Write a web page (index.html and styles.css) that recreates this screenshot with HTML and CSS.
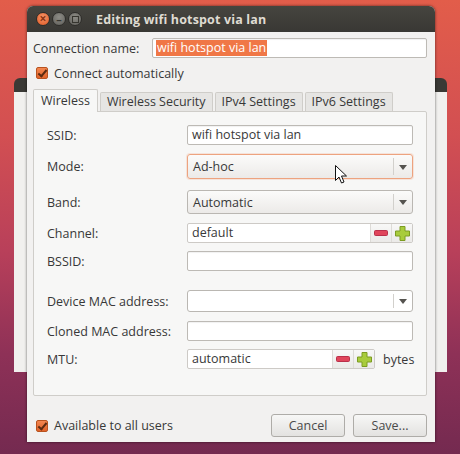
FILE: index.html
```html
<!DOCTYPE html>
<html lang="en">

<head>
    <meta charset="UTF-8">
    <title>Editing wifi hotspot via lan</title>
    <link rel="stylesheet" href="styles.css">
</head>

<body>
    <div class="desktop">
        <!-- window behind the dialog -->
        <div class="back-window"></div>

        <div class="dialog">
            <div class="titlebar">
                <span class="wbtn close">&#215;</span>
                <span class="wbtn">&#8211;</span>
                <span class="wbtn max"><i></i></span>
                <span class="title">Editing wifi hotspot via lan</span>
            </div>

            <div class="content">
                <div class="name-row">
                    <label class="name-label">Connection name:</label>
                    <div class="entry name-entry"><span class="selected">wifi hotspot via lan</span></div>
                </div>

                <div class="check-row">
                    <span class="checkbox"></span>
                    <span>Connect automatically</span>
                </div>

                <div class="notebook">
                    <div class="tabs">
                        <div class="tab active">Wireless</div>
                        <div class="tab">Wireless Security</div>
                        <div class="tab">IPv4 Settings</div>
                        <div class="tab">IPv6 Settings</div>
                    </div>
                    <div class="panel">
                        <div class="row r-ssid">
                            <label>SSID:</label>
                            <div class="entry">wifi hotspot via lan</div>
                        </div>
                        <div class="row r-mode">
                            <label>Mode:</label>
                            <div class="combo focused">
                                <span class="combo-text">Ad-hoc</span>
                                <span class="arrow"></span>
                            </div>
                        </div>
                        <div class="row r-band">
                            <label>Band:</label>
                            <div class="combo">
                                <span class="combo-text">Automatic</span>
                                <span class="arrow"></span>
                            </div>
                        </div>
                        <div class="row r-channel">
                            <label>Channel:</label>
                            <div class="spin">
                                <div class="spin-entry">default</div>
                                <span class="spin-btn minus"><svg width="14" height="6" viewBox="0 0 14 6"><rect x="0.5" y="0.5" width="13" height="5" rx="1" fill="#e0455b" stroke="#b9304a"/></svg></span>
                                <span class="spin-btn plus"><svg width="15" height="15" viewBox="0 0 15 15"><path d="M5 0.5h5v4.5h4.5v5h-4.5v4.5h-5v-4.5h-4.5v-5h4.5z" fill="#a8cc3c" stroke="#7c9c22"/></svg></span>
                            </div>
                        </div>
                        <div class="row r-bssid">
                            <label>BSSID:</label>
                            <div class="entry"></div>
                        </div>
                        <div class="row r-device">
                            <label>Device MAC address:</label>
                            <div class="combo entry-combo">
                                <span class="combo-text"></span>
                                <span class="arrow"></span>
                            </div>
                        </div>
                        <div class="row r-cloned">
                            <label>Cloned MAC address:</label>
                            <div class="entry"></div>
                        </div>
                        <div class="row r-mtu">
                            <label>MTU:</label>
                            <div class="mtu-wrap">
                                <div class="spin mtu">
                                    <div class="spin-entry">automatic</div>
                                    <span class="spin-btn minus"><svg width="14" height="6" viewBox="0 0 14 6"><rect x="0.5" y="0.5" width="13" height="5" rx="1" fill="#e0455b" stroke="#b9304a"/></svg></span>
                                    <span class="spin-btn plus"><svg width="15" height="15" viewBox="0 0 15 15"><path d="M5 0.5h5v4.5h4.5v5h-4.5v4.5h-5v-4.5h-4.5v-5h4.5z" fill="#a8cc3c" stroke="#7c9c22"/></svg></span>
                                </div>
                                <span class="unit">bytes</span>
                            </div>
                        </div>
                    </div>
                </div>

                <div class="bottom-row">
                    <div class="check-row all-users">
                        <span class="checkbox"></span>
                        <span>Available to all users</span>
                    </div>
                    <div class="buttons">
                        <div class="button">Cancel</div>
                        <div class="button">Save...</div>
                    </div>
                </div>
            </div>
        </div>

        <!-- mouse pointer over the Mode combo -->
        <svg class="cursor" width="12" height="19" viewBox="0 0 12 19">
            <path d="M0.5 0.5v15l3.5-3.5 2.5 6 2.5-1-2.5-6h5z" fill="#fff" stroke="#111" stroke-width="1"/>
        </svg>
    </div>
</body>

</html>
```

FILE: styles.css
```css
body {
    margin: 0;
    font-family: "Open Sans", "DejaVu Sans", sans-serif;
    font-size: 12.5px;
    color: #383838;
}

.desktop {
    position: relative;
    width: 460px;
    height: 454px;
    overflow: hidden;
    background: linear-gradient(to bottom, #e25d4a 0%, #d24f52 30%, #b9405a 55%, #8e3157 78%, #742a50 100%);
}

.back-window {
    position: absolute;
    left: 14px;
    top: 78px;
    width: 433px;
    height: 294px;
    border-radius: 6px 6px 0 0;
    background: linear-gradient(to bottom, #3a3935 0px, #3a3935 14px, #f1f0ee 14px);
}

.dialog {
    position: absolute;
    left: 27px;
    top: 6px;
    width: 408px;
    height: 436px;
    border-radius: 6px 6px 0 0;
    background: #f2f1f0;
    box-shadow: 0 0 3px rgba(0, 0, 0, 0.6);
}

.titlebar {
    height: 26px;
    display: flex;
    align-items: center;
    padding-left: 9px;
    border-radius: 6px 6px 0 0;
    background: linear-gradient(to bottom, #46453f, #393834);
}

.wbtn {
    width: 14px;
    height: 14px;
    margin-right: 2px;
    border-radius: 50%;
    background: radial-gradient(circle at 50% 35%, #8d8c86, #5f5e59);
    border: 1px solid #2e2d2a;
    box-sizing: border-box;
    color: #36352f;
    font-size: 11px;
    font-weight: bold;
    line-height: 11px;
    text-align: center;
}

.wbtn.close {
    background: radial-gradient(circle at 50% 35%, #f69468, #e05a25);
    color: #8a3412;
    font-size: 12px;
}

.wbtn.max i {
    display: inline-block;
    width: 5px;
    height: 5px;
    margin-top: 3px;
    border: 1px solid #36352f;
}

.title {
    margin-left: 12px;
    color: #dfdbd2;
    font-weight: bold;
    font-size: 12.5px;
    letter-spacing: 0.15px;
}

.content {
    padding: 6px 8px 0 6px;
}

.name-row {
    display: flex;
    align-items: center;
    height: 20px;
}

.name-label {
    width: 119px;
}

.entry {
    box-sizing: border-box;
    height: 20px;
    padding: 0 4px;
    background: #fff;
    border: 1px solid #bdbab5;
    border-radius: 2px;
    box-shadow: inset 0 1px 1px rgba(0, 0, 0, 0.06);
    line-height: 18px;
    white-space: nowrap;
}

.name-entry {
    flex: 1;
    padding-left: 3px;
}

.selected {
    display: inline-block;
    padding: 0 1px;
    background: #f07746;
    color: #fff;
    line-height: 16px;
}

.check-row {
    display: flex;
    align-items: center;
    gap: 6px;
    height: 18px;
    margin-top: 6px;
    padding-left: 3px;
}

.checkbox {
    width: 12px;
    height: 12px;
    box-sizing: border-box;
    border: 1px solid #b8521f;
    border-radius: 2px;
    background: linear-gradient(to bottom, #f3864f, #e0632a);
    position: relative;
}

.checkbox::after {
    content: "";
    position: absolute;
    left: 3px;
    top: 0px;
    width: 3px;
    height: 7px;
    border: solid #5b2a10;
    border-width: 0 2px 2px 0;
    transform: rotate(40deg);
}

.notebook {
    margin-top: 7px;
}

.tabs {
    display: flex;
    align-items: flex-end;
    height: 22px;
}

.tab {
    box-sizing: border-box;
    height: 19px;
    padding: 0 6px;
    margin-right: 2px;
    line-height: 18px;
    background: #e6e5e3;
    border: 1px solid #cfcdc9;
    border-bottom: none;
    border-radius: 2px 2px 0 0;
}

.tab.active {
    height: 23px;
    margin-bottom: -1px;
    padding: 0 7px;
    line-height: 21px;
    background: #f7f7f6;
    position: relative;
}

.panel {
    box-sizing: border-box;
    height: 285px;
    padding: 13px 14px 0 13px;
    background: #f7f7f6;
    border: 1px solid #cfcdc9;
    border-radius: 0 2px 2px 2px;
    display: flex;
    flex-direction: column;
}

.row {
    display: grid;
    grid-template-columns: 140px 226px;
    align-items: center;
    height: 20px;
}

.r-mode {
    height: 25px;
    margin-top: 9px;
}

.r-band {
    height: 24px;
    margin-top: 11px;
}

.r-channel {
    margin-top: 9px;
}

.r-bssid {
    margin-top: 8px;
}

.r-device {
    height: 22px;
    margin-top: 19px;
}

.r-cloned {
    margin-top: 9px;
}

.r-mtu {
    margin-top: 8px;
}

.combo {
    box-sizing: border-box;
    height: 100%;
    display: flex;
    align-items: center;
    background: linear-gradient(to bottom, #fbfbfa, #eceae8);
    border: 1px solid #bab7b2;
    border-radius: 3px;
}

.combo.focused {
    border-color: #eda37f;
    box-shadow: 0 0 0 1px rgba(240, 150, 110, 0.2);
}

.combo-text {
    flex: 1;
    padding-left: 5px;
}

.arrow {
    width: 18px;
    height: 70%;
    border-left: 1px solid #d2d0cc;
    position: relative;
}

.arrow::after {
    content: "";
    position: absolute;
    left: 5px;
    top: 50%;
    margin-top: -2px;
    border-left: 4px solid transparent;
    border-right: 4px solid transparent;
    border-top: 5px solid #55534f;
}

.entry-combo {
    background: #fff;
}

.spin {
    display: flex;
    height: 20px;
    box-sizing: border-box;
    border: 1px solid #cdcac6;
    border-radius: 2px;
    background: #fff;
}

.spin-entry {
    flex: 1;
    padding-left: 4px;
    line-height: 18px;
}

.spin-btn {
    width: 20px;
    display: flex;
    align-items: center;
    justify-content: center;
    border-left: 1px solid #dddbd7;
    background: linear-gradient(to bottom, #f8f8f7, #ebeae8);
}

.mtu-wrap {
    display: flex;
    align-items: center;
    width: 240px;
}

.spin.mtu {
    width: 188px;
}

.unit {
    margin-left: 8px;
}

.bottom-row {
    display: flex;
    align-items: center;
    justify-content: space-between;
    margin-top: 18px;
    height: 23px;
}

.all-users {
    margin-top: 0;
}

.buttons {
    display: flex;
    gap: 8px;
}

.button {
    box-sizing: border-box;
    width: 74px;
    height: 23px;
    line-height: 21px;
    text-align: center;
    background: linear-gradient(to bottom, #f7f7f6, #e3e2e0);
    border: 1px solid #aeaca8;
    border-radius: 3px;
    color: #4a4a4a;
}

.cursor {
    position: absolute;
    left: 335px;
    top: 165px;
}
```
